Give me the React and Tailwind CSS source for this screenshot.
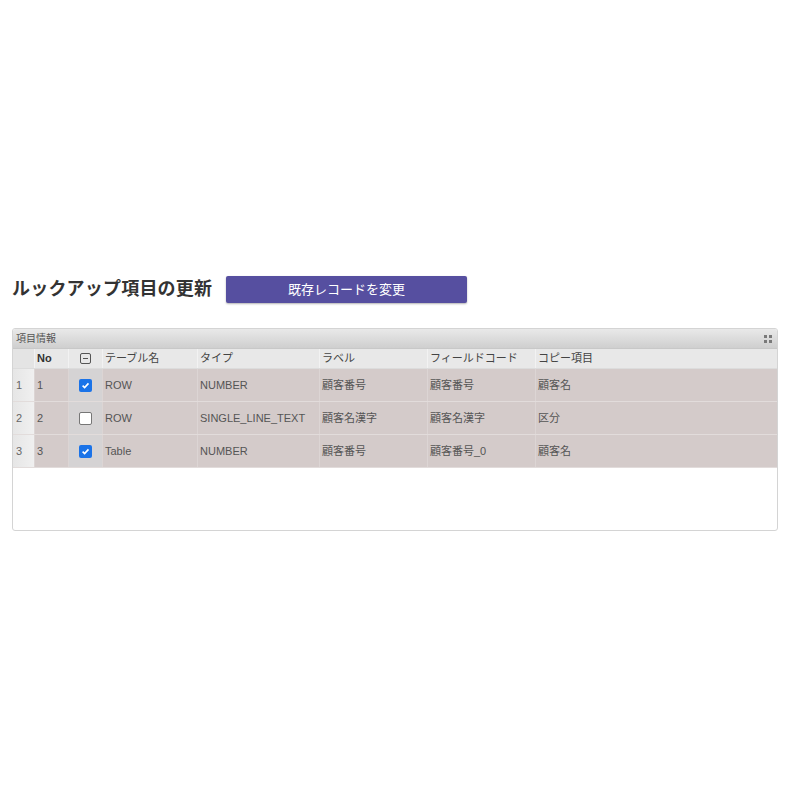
import { useState } from "react";

const columns = [
  { key: "table", label: "テーブル名", w: "w-[95px]" },
  { key: "type", label: "タイプ", w: "w-[122px]" },
  { key: "label", label: "ラベル", w: "w-[108px]" },
  { key: "code", label: "フィールドコード", w: "w-[108px]" },
  { key: "copy", label: "コピー項目", w: "flex-1" },
];

const initialRows = [
  { no: 1, checked: true, table: "ROW", type: "NUMBER", label: "顧客番号", code: "顧客番号", copy: "顧客名" },
  { no: 2, checked: false, table: "ROW", type: "SINGLE_LINE_TEXT", label: "顧客名漢字", code: "顧客名漢字", copy: "区分" },
  { no: 3, checked: true, table: "Table", type: "NUMBER", label: "顧客番号", code: "顧客番号_0", copy: "顧客名" },
];

function CheckBox({ checked, onChange }) {
  return (
    <button
      onClick={onChange}
      className={
        "w-[13px] h-[13px] rounded-[2px] flex items-center justify-center " +
        (checked ? "bg-[#1a73e8]" : "bg-white border border-[#767676]")
      }
    >
      {checked && (
        <svg width="9" height="9" viewBox="0 0 10 10">
          <path d="M1.8 5.2 L4 7.3 L8.3 2.6" fill="none" stroke="white" strokeWidth="1.8" />
        </svg>
      )}
    </button>
  );
}

export default function App() {
  const [rows, setRows] = useState(initialRows);

  const toggle = (i) => {
    setRows(rows.map((r, idx) => (idx === i ? { ...r, checked: !r.checked } : r)));
  };

  return (
    <div className="w-[800px] h-[800px] bg-white pt-[275px] px-3 font-['Liberation_Sans','Noto_Sans_CJK_JP',sans-serif]">
      {/* title + button */}
      <div className="flex items-center h-[29px]">
        <h1 className="text-[18px] font-bold text-[#333] tracking-[0.2px] w-[214px]">ルックアップ項目の更新</h1>
        <button className="w-[241px] h-[27px] bg-[#564fa0] text-white text-[13px] rounded-[2px] shadow-[0_1px_2px_rgba(0,0,0,0.3)]">
          既存レコードを変更
        </button>
      </div>

      {/* panel */}
      <div className="mt-[24px] w-[766px] h-[203px] border border-[#d4d4d4] rounded-[3px] bg-white overflow-hidden">
        <div className="h-[20px] flex items-center justify-between px-[3px] bg-gradient-to-b from-[#e9e9e9] to-[#cfcfcf] border-b border-[#c8c8c8]">
          <span className="text-[10px] text-[#555]">項目情報</span>
          <svg width="8" height="8" viewBox="0 0 8 8" className="mr-[2px]">
            <path d="M0 0 H3 V3 H0 Z M5 0 H8 V3 H5 Z M0 5 H3 V8 H0 Z M5 5 H8 V8 H5 Z" fill="#7a7a7a" />
          </svg>
        </div>

        {/* header row */}
        <div className="flex h-[20px] bg-[#e8e8e8] text-[11px] text-[#333] border-b border-[#dcdcdc]">
          <div className="w-[21px] bg-[#e4e4e4]" />
          <div className="w-[34px] flex items-center pl-[2px] font-bold border-l border-[#f2f2f2]">No</div>
          <div className="w-[34px] flex items-center justify-center border-l border-[#f2f2f2]">
            <div className="w-[11px] h-[11px] border border-[#555] rounded-[2px] flex items-center justify-center">
              <div className="w-[5px] h-[1px] bg-[#555]" />
            </div>
          </div>
          {columns.map((c) => (
            <div key={c.key} className={c.w + " flex items-center pl-[2px] border-l border-[#f2f2f2] text-[#444]"}>
              {c.label}
            </div>
          ))}
        </div>

        {/* data rows */}
        {rows.map((r, i) => (
          <div key={r.no} className="flex h-[33px] text-[11px] text-[#555] border-b border-[#e2dcdb]">
            <div className="w-[21px] flex items-center pl-[3px] bg-gradient-to-r from-[#e6e6e6] to-[#f0f0f0] text-[#666]">{r.no}</div>
            <div className="w-[34px] flex items-center pl-[2px] bg-[#d4cbca] border-l border-[#dcd5d4]">{r.no}</div>
            <div className="w-[34px] flex items-center justify-center bg-[#d5d3d4] border-l border-[#dcd5d4]">
              <CheckBox checked={r.checked} onChange={() => toggle(i)} />
            </div>
            {columns.map((c) => (
              <div key={c.key} className={c.w + " flex items-center pl-[2px] bg-[#d4cbca] border-l border-[#dcd5d4]"}>
                {r[c.key]}
              </div>
            ))}
          </div>
        ))}
      </div>
    </div>
  );
}
